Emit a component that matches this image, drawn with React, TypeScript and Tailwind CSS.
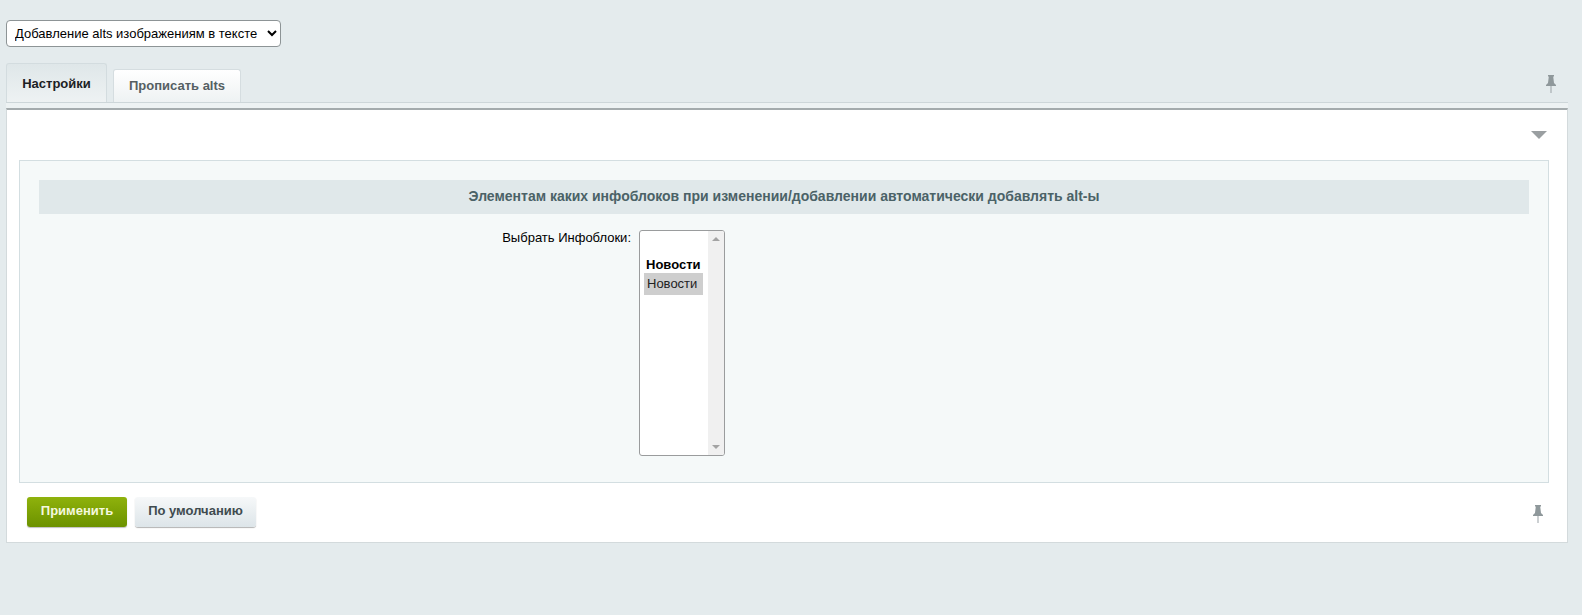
import React from 'react';

const Pin = () => (
  <svg width="12" height="18" viewBox="0 0 12 18" className="block">
    <path d="M3 0h6v1.5H8.2L9 8l2 2v1H1v-1l2-2 .8-6.5H3z" fill="#8f989b" />
    <rect x="5.5" y="11" width="1" height="7" fill="#9aa2a5" />
  </svg>
);

const App: React.FC = () => {
  return (
    <div className="h-[615px] overflow-hidden bg-[#e4ebed] pt-5 px-[6px] text-[13px] text-black font-['Liberation_Sans',Arial,sans-serif]">
      <select className="block h-[27px] w-[275px] rounded-[4px] border border-[#8d9496] bg-white pl-1 text-[13px] text-black">
        <option>Добавление alts изображениям в тексте</option>
      </select>

      {/* Tabs */}
      <div className="mt-4 flex h-[39px] items-end pr-[14px]">
        <div className="flex h-[39px] w-[101px] items-start justify-center rounded-t-[3px] border border-b-0 border-[#d3dcdf] bg-gradient-to-b from-[#dfe7e9] to-[#eef2f3] pt-[10px] text-[13px] font-bold text-[#1c2124]">
          Настройки
        </div>
        <div className="ml-[6px] flex h-[33px] w-[128px] items-start justify-center rounded-t-[3px] border border-b-0 border-[#d5dde0] bg-gradient-to-b from-white to-[#eef2f3] pt-[6px] text-[13px] font-bold text-[#555f63]">
          Прописать alts
        </div>
        <div className="mb-[5px] ml-auto mr-[5px] self-end pb-1">
          <Pin />
        </div>
      </div>
      <div className="h-[6px] w-[1562px] border-t border-[#cdd6d9] bg-[#edf2f3]" />

      {/* Panel */}
      <div className="h-[435px] w-[1562px] border-x border-b border-t-2 border-[#d3dadc] border-t-[#a4abad] bg-white px-3">
        <div className="flex h-[50px] justify-end pr-2 pt-[21px]">
          <div className="h-0 w-0 border-x-[8px] border-t-[8px] border-x-transparent border-t-[#9a9fa1]" />
        </div>

        <div className="h-[323px] w-[1530px] border border-[#d3dee1] bg-[#f5f9f9] px-[19px] pt-[19px]">
          <div className="flex h-[34px] items-center justify-center bg-[#e0e8ea] pb-[2px] text-[14px] font-bold text-[#4b6267]">
            Элементам каких инфоблоков при изменении/добавлении автоматически добавлять alt-ы
          </div>

          <div className="mt-4 flex items-start">
            <div className="w-[592px] text-right text-[13px] leading-[15px] text-black">Выбрать Инфоблоки:</div>
            <div className="ml-2 flex h-[226px] w-[86px] overflow-hidden rounded-[3px] border border-[#9a9c9d] bg-white">
              <div className="w-[68px] pl-1 pt-[25px]">
                <div className="pl-[2px] text-[13px] font-bold leading-[17px] text-black">Новости</div>
                <div className="h-[22px] w-[59px] bg-[#cecece] pl-[3px] text-[13px] leading-[21px] text-[#222]">Новости</div>
              </div>
              <div className="flex flex-1 flex-col items-center justify-between bg-[#f0f0f0] pb-[6px] pt-[6px]">
                <div className="h-0 w-0 border-x-[4px] border-b-[4px] border-x-transparent border-b-[#a3a3a3]" />
                <div className="h-0 w-0 border-x-[4px] border-t-[4px] border-x-transparent border-t-[#a3a3a3]" />
              </div>
            </div>
          </div>
        </div>

        {/* Footer */}
        <div className="flex items-start pl-2 pt-[14px]">
          <button className="h-[30px] w-[100px] rounded-[3px] bg-gradient-to-b from-[#8fb20c] to-[#6c9200] pb-[2px] text-[13px] font-bold text-[#f4f8df] shadow-[0_1px_1px_rgba(0,0,0,0.25)]">
            Применить
          </button>
          <button className="ml-2 h-[30px] w-[121px] rounded-[3px] bg-gradient-to-b from-[#f6f8f9] to-[#dde5e9] pb-[2px] text-[13px] font-bold text-[#3f4b4f] shadow-[0_1px_1px_rgba(0,0,0,0.3)]">
            По умолчанию
          </button>
          <div className="ml-auto mr-[11px] mt-[8px]">
            <Pin />
          </div>
        </div>
      </div>
    </div>
  );
};

export default App;
